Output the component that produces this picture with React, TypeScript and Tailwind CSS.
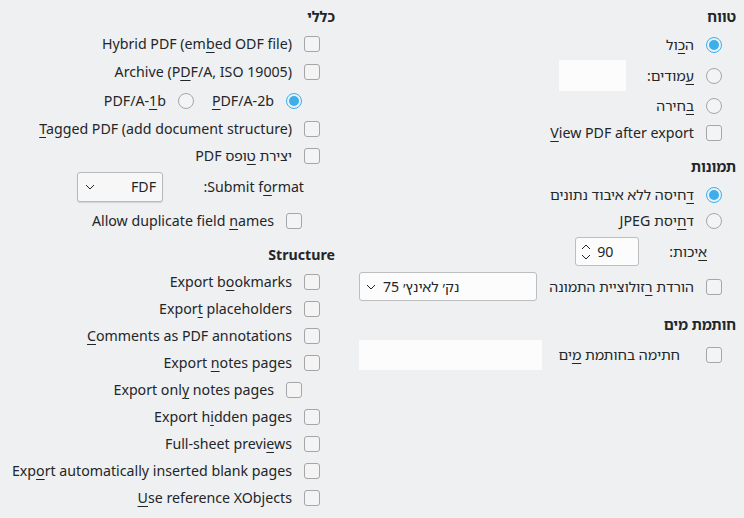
import type { ReactNode } from "react";

function U({ children }: { children: ReactNode }) {
  return <span className="underline decoration-1 underline-offset-[3px]">{children}</span>;
}

function Checkbox() {
  return <span className="w-4 h-4 shrink-0 rounded-[3px] border border-[#a5a6a8] bg-[#f4f4f5]" />;
}

function Radio({ checked = false }: { checked?: boolean }) {
  if (checked) {
    return (
      <span className="w-4 h-4 shrink-0 rounded-full border border-[#3daee9] bg-[#e6f3fb] flex items-center justify-center">
        <span className="w-[10px] h-[10px] rounded-full bg-[#3daee9]" />
      </span>
    );
  }
  return <span className="w-4 h-4 shrink-0 rounded-full border border-[#a5a6a8] bg-[#f4f4f5]" />;
}

function Heading({ children, className = "" }: { children: ReactNode; className?: string }) {
  return <div className={`h-5 flex items-center font-bold ${className}`}>{children}</div>;
}

function Row({ children, className = "" }: { children: ReactNode; className?: string }) {
  return <div className={`flex items-center gap-[12px] whitespace-nowrap ${className}`}>{children}</div>;
}

function Chevron() {
  return (
    <svg width="10" height="6" viewBox="0 0 10 6" className="shrink-0">
      <path d="M1 1 L5 5 L9 1" fill="none" stroke="#232629" strokeWidth="1" />
    </svg>
  );
}

function SpinBox() {
  return (
    <div dir="ltr" className="w-[64px] h-[29px] shrink-0 rounded-[3px] border border-[#bcbebf] bg-[#fcfcfc] flex items-center gap-[6px] pl-[5px]">
      <svg width="10" height="20" viewBox="0 0 10 20" className="shrink-0">
        <path d="M1 7 L5 3 L9 7" fill="none" stroke="#232629" strokeWidth="1" />
        <path d="M1 13 L5 17 L9 13" fill="none" stroke="#232629" strokeWidth="1" />
      </svg>
      <span>90</span>
    </div>
  );
}

export default function App() {
  return (
    <div
      dir="rtl"
      className="w-[744px] h-[518px] overflow-hidden bg-[#eff0f1] text-[#232629] text-[14.2px] flex gap-[24px] pr-[8px] font-['Noto_Sans','Noto_Sans_Hebrew','DejaVu_Sans',sans-serif]"
    >
      {/* right column */}
      <div className="w-[377px] shrink-0 flex flex-col pt-[7px]">
        <Heading>טווח</Heading>
        <Row className="h-[30px] mt-[3px] pr-[14px]">
          <Radio checked />
          <span>ה<U>כ</U>ול</span>
        </Row>
        <Row className="h-[31px] pr-[14px]">
          <Radio />
          <span><U>ע</U>מודים:</span>
          <div className="w-[67px] h-[31px] bg-[#fcfcfc] ms-[9px]" />
        </Row>
        <Row className="h-[30px] pr-[14px]">
          <Radio />
          <span><U>ב</U>חירה</span>
        </Row>
        <Row className="h-[24px] pr-[14px]">
          <Checkbox />
          <span><U>V</U>iew PDF after export</span>
        </Row>

        <Heading className="mt-[12px]">תמונות</Heading>
        <Row className="h-[26px] mt-[5px] pr-[14px]">
          <Radio checked />
          <span><U>ד</U>חיסה ללא איבוד נתונים</span>
        </Row>
        <Row className="h-[26px] pr-[14px]">
          <Radio />
          <span>ד<U>ח</U>יסת JPEG</span>
        </Row>
        <div className="h-[29px] mt-[3px] pr-[29px] flex items-center gap-[30px]">
          <span><U>א</U>יכות:</span>
          <SpinBox />
        </div>
        <Row className="h-[29px] mt-[6px] pr-[14px] gap-[11px]">
          <Checkbox />
          <span>הורדת <U>ר</U>זולוציית התמונה</span>
          <div dir="ltr" className="flex-1 min-w-0 h-[29px] rounded-[3px] border border-[#bcbebf] bg-[#fcfcfc] flex items-center gap-[7px] pl-[6px]">
            <Chevron />
            <span>75 נק׳ לאינץ׳</span>
          </div>
        </Row>

        <Heading className="mt-[14px]">חותמת מים</Heading>
        <Row className="h-[30px] mt-[5px] pr-[14px]">
          <Checkbox />
          <span className="ms-[14px]">חתימה בחותמת <U>מ</U>ים</span>
          <div className="ms-auto w-[183px] h-[30px] bg-[#fcfcfc]" />
        </Row>
      </div>

      {/* left column */}
      <div className="w-[335px] shrink-0 flex flex-col pt-[7px]">
        <Heading>כללי</Heading>
        <Row className="h-[28px] mt-[3px] pr-[15px]">
          <Checkbox />
          <span>Hybrid PDF (em<U>b</U>ed ODF file)</span>
        </Row>
        <Row className="h-[28px] pr-[15px]">
          <Checkbox />
          <span>Archive (P<U>D</U>F/A, ISO 19005)</span>
        </Row>
        <Row className="h-[28px] mt-[1px] pr-[33px]">
          <Radio checked />
          <span><U>P</U>DF/A-2b</span>
          <span className="ms-[6px] flex"><Radio /></span>
          <span>PDF/A-<U>1</U>b</span>
        </Row>
        <Row className="h-[28px] pr-[15px]">
          <Checkbox />
          <span><U>T</U>agged PDF (add document structure)</span>
        </Row>
        <Row className="h-[26px] pr-[15px]">
          <Checkbox />
          <span>יצירת <U>ט</U>ופס PDF</span>
        </Row>
        <div className="h-[30px] mt-[3px] pr-[31px] flex items-center whitespace-nowrap">
          <span className="w-[141px] shrink-0">
            <span dir="ltr" className="inline-block">Submit f<U>o</U>rmat</span>:
          </span>
          <div dir="ltr" className="w-[86px] h-[30px] shrink-0 rounded-[3px] border border-[#b8babc] bg-[#f7f7f8] shadow-[0_1px_1px_rgba(0,0,0,0.12)] flex items-center justify-between pl-[7px] pr-[6px]">
            <Chevron />
            <span>FDF</span>
          </div>
        </div>
        <Row className="h-[28px] mt-[5px] pr-[33px]">
          <Checkbox />
          <span>Allow duplicate field <U>n</U>ames</span>
        </Row>

        <Heading className="mt-[10px]">Structure</Heading>
        <div className="flex flex-col mt-[3px]">
          <Row className="h-[27px] pr-[15px]">
            <Checkbox />
            <span>Export b<U>o</U>okmarks</span>
          </Row>
          <Row className="h-[27px] pr-[15px]">
            <Checkbox />
            <span>Expor<U>t</U> placeholders</span>
          </Row>
          <Row className="h-[27px] pr-[15px]">
            <Checkbox />
            <span><U>C</U>omments as PDF annotations</span>
          </Row>
          <Row className="h-[27px] pr-[15px]">
            <Checkbox />
            <span>Export <U>n</U>otes pages</span>
          </Row>
          <Row className="h-[27px] pr-[33px]">
            <Checkbox />
            <span>Export onl<U>y</U> notes pages</span>
          </Row>
          <Row className="h-[27px] pr-[15px]">
            <Checkbox />
            <span>Export h<U>i</U>dden pages</span>
          </Row>
          <Row className="h-[27px] pr-[15px]">
            <Checkbox />
            <span>Full-sheet previ<U>e</U>ws</span>
          </Row>
          <Row className="h-[27px] pr-[15px]">
            <Checkbox />
            <span>Exp<U>o</U>rt automatically inserted blank pages</span>
          </Row>
          <Row className="h-[27px] pr-[15px]">
            <Checkbox />
            <span><U>U</U>se reference XObjects</span>
          </Row>
        </div>
      </div>
    </div>
  );
}
